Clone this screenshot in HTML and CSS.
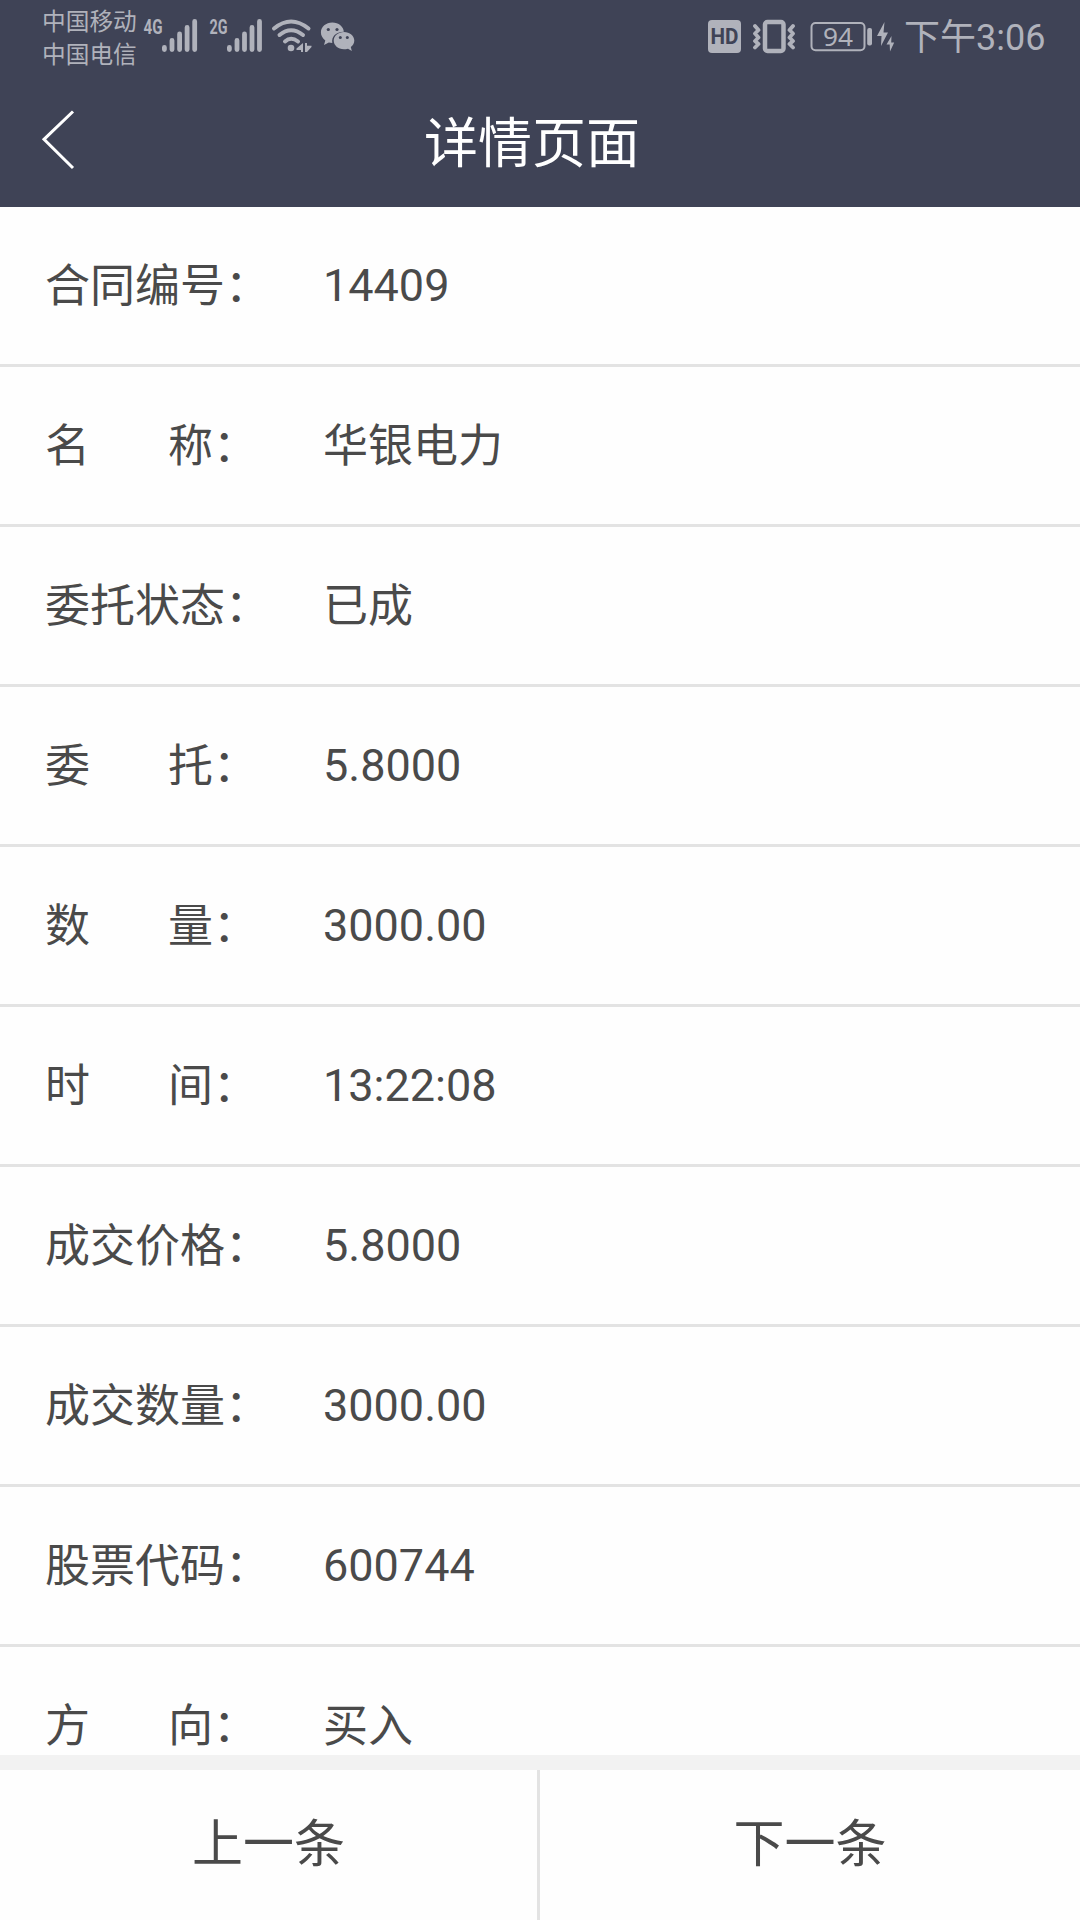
FILE: index.html
```html
<!DOCTYPE html>
<html lang="zh-CN">
<head>
<meta charset="utf-8">
<title>详情页面</title>
<link rel="stylesheet" href="styles.css">
</head>
<body>
<div class="screen">
  <header class="header">
    <div class="status">
      <div class="carriers"><span>中国移动</span><span>中国电信</span></div>
      <svg class="status-icons" width="216" height="75" viewBox="140 0 216 75">
        <g class="net">
          <text x="143.5" y="34" textLength="19" lengthAdjust="spacingAndGlyphs">4G</text>
          <text x="209.5" y="34" textLength="18" lengthAdjust="spacingAndGlyphs">2G</text>
        </g>
        <g class="line bar">
          <path d="M164.4 47.5v2M172 40.5v9M179.6 34v15.5M187.1 27.5v22M194.700 21.500v28"/>
          <path d="M229.4 47.5v2M237 40.5v9M244.5 34v15.5M252 27.5v22M259.5 21.5v28"/>
        </g>
        <path class="line arc" d="M274 28.5Q291 14.5 308.5 28.5M279.5 35Q291 25.5 303 35M285 41.5Q291 36 298 41.5"/>
        <g class="solid">
          <circle cx="291" cy="48" r="3.3"/>
          <path d="M303 43v9h-2v-2h-4.500v-1.500zM305 43h2v2.800h4.500v1.200l-4.500 5h-2z"/>
          <path d="M332.3 22.5c6.300 0 11.400 4.300 11.500 9.300c-8 0-12.500 5-11.500 11.200l-3.500-.6l-4.800 2.600l1.300-4.600c-2.700-2-4.400-4.900-4.400-8.200c0-5.400 5.100-9.700 11.400-9.700z"/>
          <path d="M344 32c5.700 0 10.300 3.900 10.300 8.600c0 2.900-1.400 5-3.500 6.500l1 3.800l-3.800-2.200c-8 2.100-14.300-2.200-14.300-8.100c0-4.700 4.600-8.600 10.300-8.600z"/>
        </g>
        <g class="hole"><circle cx="328.3" cy="29.5" r="1.6"/><circle cx="337" cy="29.5" r="1.6"/><circle cx="340.3" cy="37.5" r="1.5"/><circle cx="347.3" cy="37.5" r="1.5"/></g>
      </svg>
      <svg class="status-icons right" width="200" height="75" viewBox="704 0 200 75">
        <rect class="solid" x="708" y="20" width="33" height="33" rx="4"/>
        <text class="hd" x="710.5" y="44" textLength="28" lengthAdjust="spacingAndGlyphs">HD</text>
        <rect class="line phone" x="765" y="22" width="18.5" height="29" rx="2.5"/>
        <path class="line zig" d="M755 26l3.500 4-3.500 3.500 3.500 4-3.500 3.500 3.500 3-3.500 3.500M793 26l-3.500 4 3.500 3.500-3.500 4 3.500 3.500-3.500 3 3.500 3.500"/>
        <rect class="line battery" x="811.5" y="23" width="53" height="27.3" rx="4"/>
        <text class="level" x="823" y="46" textLength="30" lengthAdjust="spacingAndGlyphs">94</text>
        <rect class="solid" x="867.2" y="28" width="4.8" height="17.5" rx="2"/>
        <path class="solid" d="M884.5 22l-7.500 14h4.500l-.5 10 7-13.500h-4.500zM891.500 36l-5 8.500h3.200l.3 7 4.200-9h-3z"/>
      </svg>
      <span class="clock">下午3:06</span>
    </div>
    <div class="titlebar">
      <svg class="back" width="40" height="66" viewBox="38 106 40 66"><path d="M73 111.5L44 139.300L73 168"/></svg>
      <h1>详情页面</h1>
    </div>
  </header>
  <main class="list">
    <div class="row"><span class="label zh">合同编号：</span><span>14409</span></div>
    <div class="row"><span class="label zh short"><i>名</i>称：</span><span class="zh">华银电力</span></div>
    <div class="row"><span class="label zh">委托状态：</span><span class="zh">已成</span></div>
    <div class="row"><span class="label zh short"><i>委</i>托：</span><span>5.8000</span></div>
    <div class="row"><span class="label zh short"><i>数</i>量：</span><span>3000.00</span></div>
    <div class="row"><span class="label zh short"><i>时</i>间：</span><span>13:22:08</span></div>
    <div class="row"><span class="label zh">成交价格：</span><span>5.8000</span></div>
    <div class="row"><span class="label zh">成交数量：</span><span>3000.00</span></div>
    <div class="row"><span class="label zh">股票代码：</span><span>600744</span></div>
    <div class="row"><span class="label zh short"><i>方</i>向：</span><span class="zh">买入</span></div>
  </main>
  <footer class="footer"><button>上一条</button><button>下一条</button></footer>
</div>
</body>
</html>
```
FILE: styles.css
```css
* { box-sizing: border-box; }
body { margin: 0; background: #fefefe; color: #4a4a4a; font-family: Roboto, "Noto Sans CJK SC", sans-serif; }
.screen { display: flex; flex-direction: column; width: 1080px; height: 1920px; overflow: hidden; }
.header { flex: none; height: 207px; background: #3f4356; }
.status { display: flex; height: 75px; padding-left: 42px; color: #b0b2bb; }
.carriers { display: flex; flex-direction: column; width: 98px; padding-top: 6px; font-size: 23.7px; line-height: 33px; white-space: nowrap; }
.status-icons { flex: none; }
.right { margin-left: 348px; }
.clock { font-size: 36px; line-height: 77px; white-space: nowrap; }
.net { fill: #b0b2bb; font: bold 20.5px Roboto, sans-serif; }
.solid { fill: #b0b2bb; }
.line { fill: none; stroke: #b0b2bb; stroke-linecap: round; stroke-linejoin: round; }
.bar { stroke-width: 4.8; }
.arc { stroke-width: 4; }
.phone { stroke-width: 4.5; }
.zig { stroke-width: 3.8; }
.battery { stroke-width: 2; }
.hole { fill: #3f4356; }
.hd { fill: #3f4356; font: bold 22px Roboto, sans-serif; }
.level { fill: #b0b2bb; font: 26px "Noto Sans", sans-serif; }
.titlebar { display: grid; grid-template-columns: 40px 1fr 94px; height: 132px; padding-left: 38px; }
.back { margin-top: 31px; fill: none; stroke: #fff; stroke-width: 3; }
.titlebar h1 { margin: 0; color: #fff; font-size: 54px; line-height: 139px; font-weight: 400; text-align: center; }
.list { flex: none; height: 1548px; overflow: hidden; }
.row { display: flex; height: 160px; padding-left: 45px; border-bottom: 3px solid #e3e3e3; font-size: 45px; line-height: 158px; }
.label { width: 278px; white-space: nowrap; }
.zh { padding-top: 1px; }
.short i { display: inline-block; width: 123px; font-style: normal; }
.footer { display: grid; grid-template-columns: 1fr 1fr; height: 165px; border-top: 15px solid #f2f2f2; }
.footer button { border: 0; padding: 0; background: none; color: inherit; font: 51px/150px Roboto, "Noto Sans CJK SC", sans-serif; }
.footer button:first-child { border-right: 3px solid #e3e3e3; }
```
